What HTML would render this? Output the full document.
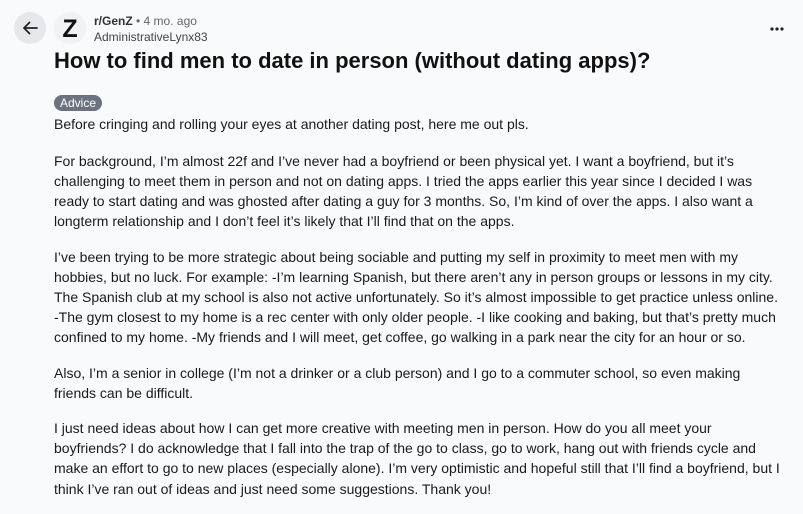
<!DOCTYPE html>
<html><head><style>
body{margin:0;background:#f9fafb;font-family:"Liberation Sans",sans-serif;color:#1c1c1c;width:803px;height:512px;overflow:hidden;position:relative}
.back{position:absolute;left:14px;top:12px;width:32px;height:32px;border-radius:50%;background:#e5e7eb}
.av{position:absolute;left:54px;top:12px;width:32px;height:32px;border-radius:50%;background:#f1f2f4;font-weight:bold;font-size:25px;text-align:center;line-height:34px;color:#111}
.sub{position:absolute;left:94px;top:13px;font-size:12px;color:#444;line-height:16px}
.sub b{color:#333}
h1{position:absolute;left:54px;top:47px;margin:0;font-size:22px;line-height:28px;font-weight:bold;color:#111;white-space:nowrap}
.tag{position:absolute;left:54px;top:95px;background:#6b7280;color:#fff;font-size:12px;border-radius:8px;padding:0 6px;line-height:16px}
.body{position:absolute;left:54px;top:114px;font-size:14px;line-height:20.2px;white-space:nowrap;color:#1a1a1b}
.body p{margin:0 0 15px}
.body p:first-child{margin-bottom:16.5px}
.dots{position:absolute;left:769px;top:26px}
</style></head><body>
<div class="back"><svg width="32" height="32" viewBox="0 0 32 32"><path d="M23 16H10M15.5 10.5L10 16l5.5 5.5" stroke="#222" stroke-width="1.8" fill="none" stroke-linecap="round" stroke-linejoin="round"/></svg></div>
<div class="av">Z</div>
<div class="sub"><b>r/GenZ</b> <span style="color:#666">• 4 mo. ago</span><br>AdministrativeLynx83</div>
<svg class="dots" width="16" height="6" viewBox="0 0 16 6"><circle cx="3" cy="3" r="1.6" fill="#222"/><circle cx="8" cy="3" r="1.6" fill="#222"/><circle cx="13" cy="3" r="1.6" fill="#222"/></svg>
<h1>How to find men to date in person (without dating apps)?</h1>
<div class="tag">Advice</div>
<div class="body">
<p>Before cringing and rolling your eyes at another dating post, here me out pls.</p>
<p>For background, I’m almost 22f and I’ve never had a boyfriend or been physical yet. I want a boyfriend, but it’s<br>challenging to meet them in person and not on dating apps. I tried the apps earlier this year since I decided I was<br>ready to start dating and was ghosted after dating a guy for 3 months. So, I’m kind of over the apps. I also want a<br>longterm relationship and I don’t feel it’s likely that I’ll find that on the apps.</p>
<p>I’ve been trying to be more strategic about being sociable and putting my self in proximity to meet men with my<br>hobbies, but no luck. For example: -I’m learning Spanish, but there aren’t any in person groups or lessons in my city.<br>The Spanish club at my school is also not active unfortunately. So it’s almost impossible to get practice unless online.<br>-The gym closest to my home is a rec center with only older people. -I like cooking and baking, but that’s pretty much<br>confined to my home. -My friends and I will meet, get coffee, go walking in a park near the city for an hour or so.</p>
<p>Also, I’m a senior in college (I’m not a drinker or a club person) and I go to a commuter school, so even making<br>friends can be difficult.</p>
<p>I just need ideas about how I can get more creative with meeting men in person. How do you all meet your<br>boyfriends? I do acknowledge that I fall into the trap of the go to class, go to work, hang out with friends cycle and<br>make an effort to go to new places (especially alone). I’m very optimistic and hopeful still that I’ll find a boyfriend, but I<br>think I’ve ran out of ideas and just need some suggestions. Thank you!</p>
</div>
</body></html>
